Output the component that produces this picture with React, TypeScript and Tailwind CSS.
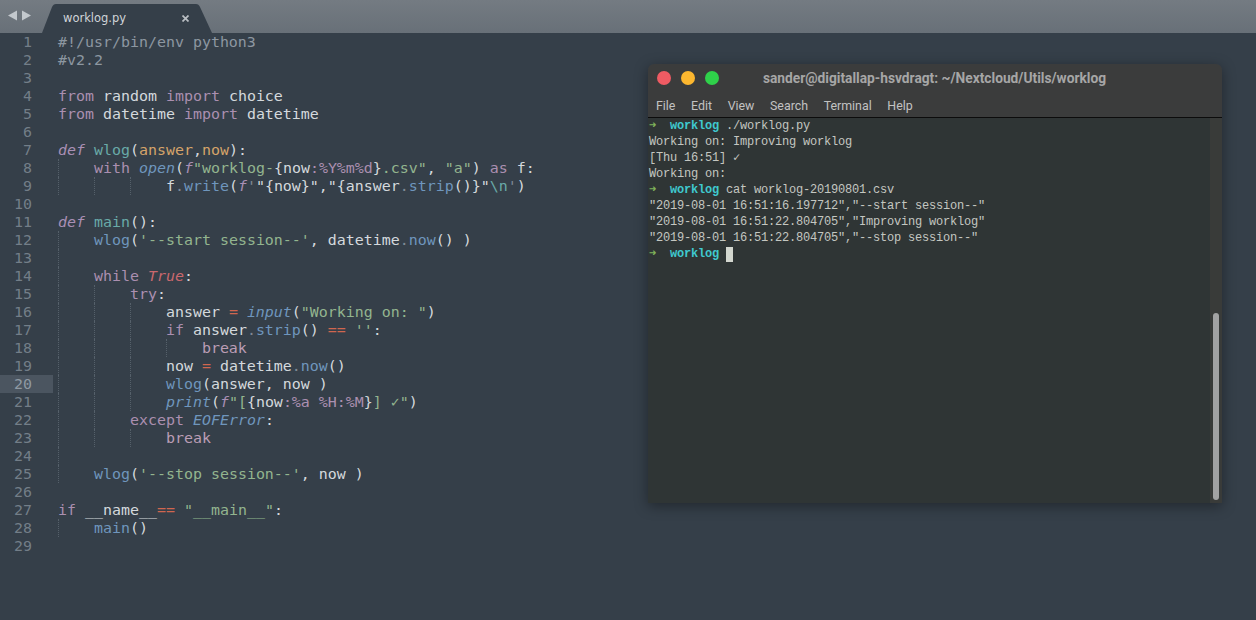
const kw = "text-[#ab8fb0]";
const it = "text-[#a98fb5] italic";
const fn = "text-[#6f96bd]";
const fni = "text-[#6f96bd] italic";
const tl = "text-[#69aaa8]";
const st = "text-[#93b58f]";
const or = "text-[#d6a46a]";
const re = "text-[#d0664f]";
const rei = "text-[#c9686e] italic";
const cm = "text-[#8d97a1]";
const dm = "text-[#7f8a95]";
const br = "text-[#bb9db5]";

type T = [string, string?];
const lines: { g?: number[]; t: T[] }[] = [
  { t: [["#!/usr/bin/env python3", cm]] },
  { t: [["#v2.2", cm]] },
  { t: [] },
  { t: [["from", kw], [" random "], ["import", kw], [" choice"]] },
  { t: [["from", kw], [" datetime "], ["import", kw], [" datetime"]] },
  { t: [] },
  { t: [["def", it], [" "], ["wlog", tl], ["("], ["answer", or], [","], ["now", or], ["):"]] },
  { g: [0], t: [["    "], ["with", kw], [" "], ["open", fni], ["("], ["f", it], ["\"worklog-", st], ["{now"], [":%Y%m%d", kw], ["}"], [".csv\"", st], [", "], ["\"a\"", st], [") "], ["as", kw], [" f:"]] },
  { g: [0, 36, 72], t: [["            f"], [".", dm], ["write", fn], ["("], ["f", it], ["'", dm], ["\"{now}\",\"{answer"], [".", dm], ["strip", fn], ["()}\""], ["\\n", tl], ["'", dm], [")"]] },
  { t: [] },
  { t: [["def", it], [" "], ["main", tl], ["():"]] },
  { g: [0], t: [["    "], ["wlog", fn], ["("], ["'--start session--'", st], [", datetime"], [".", dm], ["now", fn], ["() )"]] },
  { g: [0], t: [] },
  { g: [0], t: [["    "], ["while", kw], [" "], ["True", rei], [":"]] },
  { g: [0, 36], t: [["        "], ["try", kw], [":"]] },
  { g: [0, 36, 72], t: [["            answer "], ["=", re], [" "], ["input", fni], ["("], ["\"Working on: \"", st], [")"]] },
  { g: [0, 36, 72], t: [["            "], ["if", kw], [" answer"], [".", dm], ["strip", fn], ["() "], ["==", re], [" "], ["''", st], [":"]] },
  { g: [0, 36, 72, 108], t: [["                "], ["break", br]] },
  { g: [0, 36, 72], t: [["            now "], ["=", re], [" datetime"], [".", dm], ["now", fn], ["()"]] },
  { g: [0, 36, 72], t: [["            "], ["wlog", fn], ["(answer, now )"]] },
  { g: [0, 36, 72], t: [["            "], ["print", fni], ["("], ["f", it], ["\"[", st], ["{now"], [":%a %H:%M", kw], ["}"], ["] ✓\"", st], [")"]] },
  { g: [0, 36], t: [["        "], ["except", kw], [" "], ["EOFError", fni], [":"]] },
  { g: [0, 36, 72], t: [["            "], ["break", br]] },
  { g: [0], t: [] },
  { g: [0], t: [["    "], ["wlog", fn], ["("], ["'--stop session--'", st], [", now )"]] },
  { t: [] },
  { t: [["if", kw], [" __name__"], ["==", re], [" "], ["\"__main__\"", st], [":"]] },
  { g: [0], t: [["    "], ["main", fn], ["()"]] },
  { t: [] },
];

function Prompt({ cmd }: { cmd?: string }) {
  return (
    <>
      <span className="text-[#7fb35a] font-bold inline-block w-[7px] text-[12px] leading-none">➜</span>
      {"  "}
      <span className="font-bold text-[#3fc9cf]">worklog</span>
      {cmd ? " " + cmd : " "}
    </>
  );
}

function Terminal() {
  return (
    <div className="absolute left-[648px] top-[64px] w-[574px] h-[439px] flex flex-col rounded-t-[6px] overflow-hidden shadow-[0_3px_14px_rgba(0,0,0,0.38)]">
      <div className="h-[53px] shrink-0 bg-[#3b3c3c] flex flex-col">
        <div className="relative h-[28px] flex items-center">
          <div className="flex gap-[10px] pl-[9px]">
            <span className="w-[14px] h-[14px] rounded-full bg-[#ef5b63]" />
            <span className="w-[14px] h-[14px] rounded-full bg-[#fcb72f]" />
            <span className="w-[14px] h-[14px] rounded-full bg-[#2fd14a]" />
          </div>
          <div className="absolute inset-0 pr-[1px] flex items-center justify-center font-['Roboto',sans-serif] font-bold text-[13.75px] text-[#a6a6a6]">
            sander@digitallap-hsvdragt: ~/Nextcloud/Utils/worklog
          </div>
        </div>
        <div className="flex gap-[15.6px] pl-[8px] mt-[6px] font-['Roboto',sans-serif] text-[12.4px] leading-[16px] text-[#c2c2c2]">
          <span>File</span>
          <span>Edit</span>
          <span>View</span>
          <span>Search</span>
          <span>Terminal</span>
          <span>Help</span>
        </div>
      </div>
      <div className="h-px shrink-0 bg-[#0c0c0c]" />
      <div className="flex-1 flex bg-[#2f3535] min-h-0">
        <div className="flex-1 pl-px font-['Liberation_Mono','DejaVu_Sans_Mono',monospace] text-[12px] tracking-[-0.2px] leading-[16px] text-[#c4c7c1] whitespace-pre">
          <div><Prompt cmd="./worklog.py" /></div>
          <div>Working on: Improving worklog</div>
          <div>[Thu 16:51] ✓</div>
          <div>Working on:</div>
          <div><Prompt cmd="cat worklog-20190801.csv" /></div>
          <div>"2019-08-01 16:51:16.197712","--start session--"</div>
          <div>"2019-08-01 16:51:22.804705","Improving worklog"</div>
          <div>"2019-08-01 16:51:22.804705","--stop session--"</div>
          <div className="flex items-center">
            <span><Prompt /></span>
            <span className="inline-block w-[7px] h-[15px] bg-[#d3d7cf]" />
          </div>
        </div>
        <div className="w-[12px] shrink-0 bg-[#393b39] flex flex-col justify-end pb-[3px] items-center">
          <div className="w-[6px] h-[187px] rounded-[3px] bg-[#a3a3a3]" />
        </div>
      </div>
    </div>
  );
}

export default function App() {
  return (
    <div className="relative w-[1256px] h-[620px] overflow-hidden bg-[#353f49] flex flex-col">
      <div className="relative h-[33px] shrink-0 bg-gradient-to-b from-[#747b82] to-[#687078] flex items-start">
        <svg className="mt-[10px] ml-[8px]" width="24" height="12" viewBox="0 0 24 12">
          <path d="M0 5.5 L9 0.5 V10.5 Z" fill="#c3c8cd" />
          <path d="M14 0.5 L23 5.5 L14 10.5 Z" fill="#c3c8cd" />
        </svg>
        <div className="absolute left-[42px] top-[4px] w-[170px] h-[29px]">
          <svg className="absolute inset-0" width="170" height="29" viewBox="0 0 170 29">
            <path d="M0 29 L10 3 C11 1 12 0 14 0 H154 C156 0 157 1 158 3 L170 29 Z" fill="#353f49" />
          </svg>
          <span className="absolute left-[21px] top-[6px] font-['DejaVu_Sans',sans-serif] text-[11.5px] leading-[16px] text-[#d0d4d8]">worklog.py</span>
          <svg className="absolute left-[140px] top-[11px]" width="7" height="7" viewBox="0 0 7 7">
            <path d="M0.5 0.5 L6.5 6.5 M6.5 0.5 L0.5 6.5" stroke="#b9bec3" strokeWidth="1.7" />
          </svg>
        </div>
      </div>
      <div className="flex-1 font-['DejaVu_Sans_Mono',monospace] text-[14.95px] leading-[18px] text-[#d4d9dd]">
        {lines.map((l, i) => (
          <div key={i} className="flex h-[18px]">
            <div className={i === 19 ? "w-[53px] shrink-0 bg-[#4b5560]" : "w-[53px] shrink-0"}>
              <div className={i === 19 ? "w-[32px] text-right text-[#8f99a3]" : "w-[32px] text-right text-[#737e88]"}>{i + 1}</div>
            </div>
            <div className="relative pl-[5px] whitespace-pre">
              {l.g?.map((x) => (
                <span key={x} className="absolute top-0 bottom-0 border-l border-dotted border-[#55606a]" style={{ left: 5 + x }} />
              ))}
              <div>
                {l.t.map(([s, c], j) => (
                  <span key={j} className={c}>{s}</span>
                ))}
              </div>
            </div>
          </div>
        ))}
      </div>
      <Terminal />
    </div>
  );
}
